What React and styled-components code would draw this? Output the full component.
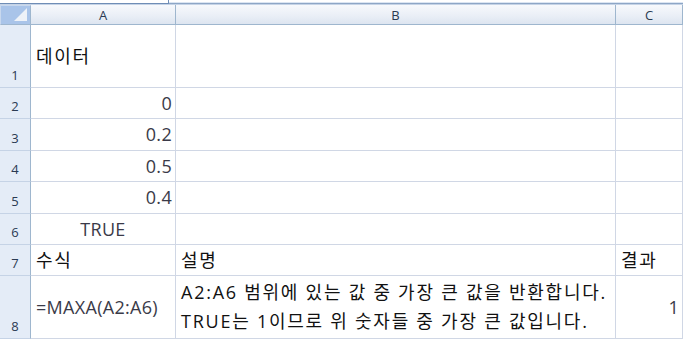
import styled, { createGlobalStyle } from "styled-components"

const Global = createGlobalStyle`
  html, body {
    margin: 0;
    padding: 0;
    background: #ffffff;
  }
`

const Page = styled.div`
  width: 683px;
  height: 340px;
  overflow: hidden;
  background: #fff;
  font-family: "Open Sans", "Noto Sans CJK KR", sans-serif;
`

const TopStrip = styled.div`
  height: 5px;
  display: flex;
  box-sizing: border-box;
  border-bottom: 1px solid #c5d3e6;
`

const FormulaEdge = styled.div`
  width: 169px;
  height: 4px;
  box-sizing: border-box;
  background: #fff;
  border-bottom: 1px solid #6f8db6;
  border-right: 1px solid #6f8db6;
`

const FormulaRest = styled.div`
  flex: 1;
  height: 4px;
  box-sizing: border-box;
  background: #dbe5f2;
  border-top: 2px solid #fff;
  border-bottom: 1px solid #8da6c6;
`

const Sheet = styled.div`
  display: grid;
  grid-template-columns: 31px 145px 440px 67px;
  grid-template-rows: 20px 63px 31px 32px 31px 32px 31px 31px 63px;
`

const Corner = styled.div`
  position: relative;
  box-sizing: border-box;
  background: #a9c4e9;
  border-right: 1px solid #9eb6ce;
  border-bottom: 1px solid #9eb6ce;
  border-top: 1px solid #c8d8ee;
  border-left: 1px solid #c8d8ee;
`

const CornerTriangle = styled.div`
  position: absolute;
  right: 3px;
  bottom: 3px;
  width: 0;
  height: 0;
  border-left: 13px solid transparent;
  border-bottom: 13px solid #eef2f8;
`

const ColHead = styled.div`
  box-sizing: border-box;
  display: flex;
  align-items: center;
  justify-content: center;
  background: linear-gradient(#f7f9fc, #e9eef6 60%, #dde5f0);
  border-right: 1px solid #9eb6ce;
  border-bottom: 1px solid #9eb6ce;
  font-size: 13px;
  color: #2a3a52;
  padding-top: 1px;
`

const RowHead = styled.div`
  box-sizing: border-box;
  display: flex;
  align-items: flex-end;
  justify-content: center;
  background: #e4ecf7;
  border-right: 1px solid #9eb6ce;
  border-bottom: 1px solid #c5d3e6;
  font-size: 13px;
  color: #2a3a52;
  padding-bottom: 3px;
`

const Cell = styled.div`
  box-sizing: border-box;
  display: flex;
  flex-direction: column;
  justify-content: center;
  align-items: ${p => (p.$align === "right" ? "flex-end" : p.$align === "center" ? "center" : "flex-start")};
  padding: 0 ${p => (p.$align === "right" ? "3px" : "0")} 0 ${p => (p.$align === "left" ? "5px" : "0")};
  border-right: 1px solid #d0d7e5;
  border-bottom: 1px solid #d0d7e5;
  font-size: 18px;
  color: ${p => (p.$num ? "#3a3a48" : "#111")};
  white-space: nowrap;
  overflow: hidden;
`

const Line = styled.div`
  line-height: 29px;
  letter-spacing: ${p => (p.$ko ? "1.75px" : "0.3px")};
`

const hasHangul = t => /[\uac00-\ud7a3]/.test(t)

const rows = [
  { n: 1, a: "데이터", aAlign: "left" },
  { n: 2, a: "0", aAlign: "right", num: true },
  { n: 3, a: "0.2", aAlign: "right", num: true },
  { n: 4, a: "0.5", aAlign: "right", num: true },
  { n: 5, a: "0.4", aAlign: "right", num: true },
  { n: 6, a: "TRUE", aAlign: "center", num: true },
  { n: 7, a: "수식", aAlign: "left", b: ["설명"], c: "결과", cAlign: "left" },
  {
    n: 8,
    a: "=MAXA(A2:A6)",
    aAlign: "left",
    num: true,
    b: [
      "A2:A6 범위에 있는 값 중 가장 큰 값을 반환합니다.",
      "TRUE는 1이므로 위 숫자들 중 가장 큰 값입니다.",
    ],
    c: "1",
    cAlign: "right",
    cNum: true,
  },
]

export default function App() {
  return (
    <Page>
      <Global />
      <TopStrip>
        <FormulaEdge />
        <FormulaRest />
      </TopStrip>
      <Sheet>
        <Corner>
          <CornerTriangle />
        </Corner>
        <ColHead>A</ColHead>
        <ColHead>B</ColHead>
        <ColHead>C</ColHead>
        {rows.map(r => (
          <Row key={r.n} r={r} />
        ))}
      </Sheet>
    </Page>
  )
}

function Row({ r }) {
  return (
    <>
      <RowHead>{r.n}</RowHead>
      <Cell $align={r.aAlign} $num={r.num}>
        <Line $ko={hasHangul(r.a)}>{r.a}</Line>
      </Cell>
      <Cell $align="left">
        {(r.b || []).map(t => (
          <Line key={t} $ko={hasHangul(t)}>
            {t}
          </Line>
        ))}
      </Cell>
      <Cell $align={r.cAlign || "left"} $num={r.cNum}>
        {r.c && <Line $ko={hasHangul(r.c)}>{r.c}</Line>}
      </Cell>
    </>
  )
}
